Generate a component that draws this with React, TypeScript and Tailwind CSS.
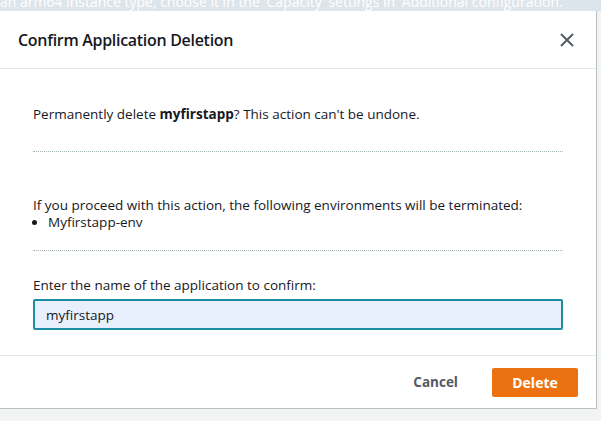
import React from 'react';

const App: React.FC = () => {
  return (
    <div
      className="w-[601px] h-[421px] bg-[#f2f3f3] overflow-hidden flex flex-col"
      style={{ fontFamily: '"Open Sans", Arial, sans-serif' }}
    >
      <div className="h-[11px] shrink-0 bg-[#dde5ec] overflow-hidden">
        <div className="-mt-[8px] text-[14px] leading-[20px] text-white whitespace-nowrap">
          an arm64 instance type, choose it in the 'Capacity' settings in 'Additional configuration.'
        </div>
      </div>

      <div className="w-[597px] h-[398px] shrink-0 bg-white border-r border-b border-[#b9c1c3] flex flex-col">
        <div className="h-[58px] shrink-0 px-[18px] flex items-center justify-between border-b border-[#e4e7e8]">
          <h2 className="text-[16px] font-semibold text-[#16191f] tracking-[-0.3px]">
            Confirm Application Deletion
          </h2>
          <button className="mr-[3px] text-[#545b64]">
            <svg width="16" height="16" viewBox="0 0 16 16" fill="none" stroke="currentColor" strokeWidth="2">
              <path d="M2 2l12 12M14 2L2 14" />
            </svg>
          </button>
        </div>

        <div className="flex-1 px-[33px] pt-[35px] text-[13.5px] leading-[20px] text-[#16191f]">
          <p>
            Permanently delete <span className="font-bold">myfirstapp</span>? This action can't be undone.
          </p>
          <div className="mt-[27px] border-t border-dotted border-[#aab7b8]" />
          <p className="mt-[43px]">
            If you proceed with this action, the following environments will be terminated:
          </p>
          <ul className="mt-[-3px] pl-[15px] list-disc">
            <li>Myfirstapp-env</li>
          </ul>
          <div className="mt-[18px] border-t border-dotted border-[#aab7b8]" />
          <p className="mt-[24px]">Enter the name of the application to confirm:</p>
          <input
            readOnly
            value="myfirstapp"
            className="mt-[4px] w-full h-[31px] px-[11px] rounded-[2px] border-2 border-[#1b8ea3] bg-[#e8f0fe] text-[13.5px] text-[#16191f] outline-none"
          />
        </div>

        <div className="h-[53px] shrink-0 border-t border-[#e4e7e8] flex items-center justify-end pr-[18px] gap-[34px]">
          <button className="text-[13.5px] font-bold text-[#545b64]">Cancel</button>
          <button className="w-[86px] h-[29px] rounded-[2px] bg-[#ec7211] text-[14px] font-bold text-white">
            Delete
          </button>
        </div>
      </div>
    </div>
  );
};

export default App;
